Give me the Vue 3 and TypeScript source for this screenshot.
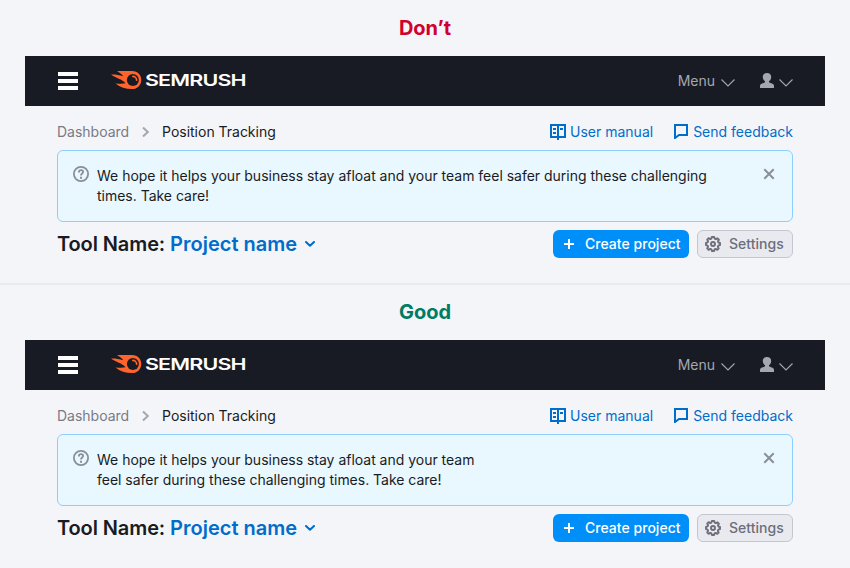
<script setup lang="ts">
interface Example {
  id: string
  title: string
  narrow: boolean
}

const examples: Example[] = [
  { id: 'dont', title: 'Don’t', narrow: false },
  { id: 'good', title: 'Good', narrow: true },
]

const message =
  'We hope it helps your business stay afloat and your team feel safer during these challenging times. Take care!'
</script>

<template>
  <main class="page">
    <section v-for="example in examples" :key="example.id" class="example">
      <h2 class="verdict" :class="example.id">{{ example.title }}</h2>

      <header class="topbar">
        <svg class="burger" width="20" height="18" viewBox="0 0 20 18">
          <path d="M0 0h20v4H0zM0 7h20v4H0zM0 14h20v4H0z" fill="#fff" />
        </svg>
        <svg class="logo" width="138" height="20" viewBox="0 0 138 20">
          <path
            d="M0 4.600C3.500 4.400 8 5 12.300 6.200C11 4.200 8.500 2.600 6 1C11 .8 17 .9 21 .9C26.800 .9 30.300 5 30.300 10C30.300 15 26.400 19.100 21 19.100C14.500 19.100 9 17 4.500 13.400C8.500 13.800 12 13.900 14.500 13.300C11.500 9.300 4.500 8 0 4.600Z"
            fill="#ff642d"
          />
          <circle cx="21.900" cy="10" r="6" fill="#181b23" />
          <path d="M21.900 6.400a3.700 3.700 0 0 1 3.700 3.700" fill="none" stroke="#ff642d" stroke-width="1.700" stroke-linecap="round" />
          <text class="wordmark" transform="translate(34 15.900) scale(1.340 1)" textLength="75.800" lengthAdjust="spacing">SEMRUSH</text>
        </svg>
        <div class="menu">
          <span>Menu</span>
          <svg width="14" height="8" viewBox="0 0 14 8">
            <path d="M.5 .5L7 7L13.500 .5" fill="none" stroke="#a4a7b0" stroke-width="1.100" />
          </svg>
        </div>
        <div class="user">
          <svg width="14" height="15" viewBox="0 0 14 15">
            <path
              d="M7 0C9.500 0 11.200 1.500 11.200 4.100C11.200 6 10.300 7.500 9 8.300V9.300C10 10.200 14 10.500 14 12.800V15H0V12.800C0 10.500 4 10.200 5 9.300V8.300C3.700 7.500 2.800 6 2.800 4.100C2.800 1.500 4.500 0 7 0Z"
              fill="#a4a7b0"
            />
          </svg>
          <svg class="user-arrow" width="14" height="8" viewBox="0 0 14 8">
            <path d="M.5 .5L7 7L13.500 .5" fill="none" stroke="#a4a7b0" stroke-width="1.100" />
          </svg>
        </div>
      </header>

      <div class="content">
        <div class="crumbs">
          <span class="parent">Dashboard</span>
          <svg class="separator" width="8" height="12" viewBox="0 0 8 12">
            <path d="M1 1.500L5.800 6L1 10.500" fill="none" stroke="#a4a7b0" stroke-width="2" />
          </svg>
          <span class="current">Position Tracking</span>
          <a class="link manual">
            <svg width="16" height="16" viewBox="0 0 16 16" fill="none" stroke="#006dca" stroke-width="2">
              <path d="M1 1H15V13H1ZM8 1V16" />
              <path d="M3 5H6M3 9H6M10 5H13" stroke-width="2" />
            </svg>
            <span>User manual</span>
          </a>
          <a class="link feedback">
            <svg width="14" height="15" viewBox="0 0 14 15" fill="none" stroke="#006dca" stroke-width="2">
              <path d="M1 1H13V11H5L1 14Z" />
            </svg>
            <span>Send feedback</span>
          </a>
        </div>

        <div class="notice">
          <svg class="help" width="16" height="16" viewBox="0 0 16 16" fill="none" stroke="#8a8e9b">
            <circle cx="8" cy="8" r="7.100" stroke-width="1.800" />
            <path d="M5.900 6.500C5.900 5 6.700 4.200 8 4.200C9.300 4.200 10.100 4.900 10.100 6C10.100 7.500 8 7.600 8 9.400" stroke-width="1.800" />
            <path d="M7 10.700h2v2h-2z" fill="#8a8e9b" stroke="none" />
          </svg>
          <p class="message" :class="{ narrow: example.narrow }">{{ message }}</p>
          <svg class="close" width="12" height="12" viewBox="0 0 12 12">
            <path d="M1.300 1.300L10.700 10.700M10.700 1.300L1.300 10.700" stroke="#8a8e9b" stroke-width="2" />
          </svg>
        </div>

        <div class="tool">
          <h1 class="name">Tool Name: <span class="project">Project name</span></h1>
          <svg class="project-arrow" width="10" height="6" viewBox="0 0 10 6">
            <path d="M1 1L5 4.800L9 1" fill="none" stroke="#006dca" stroke-width="2" stroke-linecap="round" stroke-linejoin="round" />
          </svg>
          <button class="button create" type="button">
            <svg width="10" height="10" viewBox="0 0 10 10">
              <path d="M5 0V10M0 5H10" stroke="#fff" stroke-width="2" />
            </svg>
            <span>Create project</span>
          </button>
          <button class="button settings" type="button">
            <svg width="16" height="16" viewBox="0 0 16 16" fill="none" stroke="#6c6e79">
              <path
                d="M6.800 1H9.200L9.700 2.700L10.900 3.200L12.500 2.300L13.900 3.700L13 5.300L13.400 6.500L15 7V9.200L13.300 9.700L12.800 10.900L13.700 12.500L12.300 13.800L10.700 12.900L9.600 13.400L9.100 15H6.900L6.400 13.400L5.200 12.900L3.600 13.800L2.200 12.400L3.100 10.800L2.600 9.600L1 9.100V6.900L2.600 6.400L3.100 5.200L2.200 3.600L3.600 2.200L5.200 3.100L6.300 2.600Z"
                stroke-width="1.900"
                stroke-linejoin="round"
              />
              <circle cx="8" cy="8" r="2" stroke-width="1.900" />
            </svg>
            <span>Settings</span>
          </button>
        </div>
      </div>
    </section>
  </main>
</template>

<style>
body {
  background: #f4f5f9;
}
</style>

<style scoped>
.page {
  width: 850px;
  height: 568px;
  overflow: hidden;
  background: #f4f5f9;
  color: #191b23;
  font-family: Inter, "Liberation Sans", sans-serif;
  font-size: 14px;
  line-height: 20px;
  letter-spacing: -0.015px;
}
.page svg {
  display: block;
  flex: none;
}
.example {
  box-sizing: border-box;
  height: 284px;
}
.example:first-child {
  box-shadow: 0 1px 0 #e9eaef, inset 0 -1px 0 #e9eaef;
}
.verdict {
  margin: 0;
  height: 56px;
  font-size: 20px;
  font-weight: 700;
  line-height: 56px;
  text-align: center;
}
.dont {
  color: #d1002f;
}
.good {
  color: #007c65;
}
.topbar {
  display: flex;
  align-items: center;
  box-sizing: border-box;
  width: 800px;
  height: 50px;
  margin: 0 auto;
  padding: 0 32px 0 33px;
  background: #181b23;
  color: #a4a7b0;
}
.logo {
  margin: -2px 0 0 33px;
}
.wordmark {
  fill: #fff;
  font-size: 16px;
  font-weight: 600;
}
.menu {
  display: flex;
  align-items: center;
  gap: 6px;
  margin-left: auto;
}
.menu svg {
  margin-top: 3px;
}
.user {
  display: flex;
  align-items: center;
  gap: 5px;
  margin-left: 25px;
}
.user svg:first-child {
  margin-top: -1px;
}
.user-arrow {
  margin-top: 3px;
}
.content {
  padding: 0 57px;
}
.crumbs {
  display: flex;
  align-items: flex-start;
  box-sizing: border-box;
  height: 44px;
  padding-top: 16px;
}
.parent {
  color: #787b86;
}
.separator {
  margin: 4px 12px 0 13px;
}
.link {
  display: flex;
  color: #006dca;
  letter-spacing: 0;
}
.link svg {
  margin-top: 2px;
}
.manual {
  gap: 4px;
  margin-left: auto;
}
.feedback {
  gap: 5px;
  margin-left: 21px;
}
.notice {
  display: flex;
  align-items: flex-start;
  box-sizing: border-box;
  height: 72px;
  padding: 15px 17px 0 15px;
  border: 1px solid #8ecdff;
  border-radius: 6px;
  background: #e9f7ff;
}
.message {
  width: 620px;
  margin: 0 auto 0 8px;
}
.message.narrow {
  width: 390px;
}
.close {
  margin-top: 2px;
}
.tool {
  display: flex;
  align-items: center;
  height: 28px;
  margin-top: 8px;
}
.name {
  margin: 0;
  font-size: 20px;
  font-weight: 600;
  line-height: 28px;
  letter-spacing: -0.1px;
}
.project {
  color: #006dca;
  letter-spacing: 0;
}
.project-arrow {
  margin-left: 8px;
}
.button {
  display: flex;
  align-items: center;
  box-sizing: border-box;
  height: 28px;
  border: 0;
  border-radius: 6px;
  font: 500 14px/20px Inter, "Liberation Sans", sans-serif;
  letter-spacing: 0.03px;
}
.create {
  gap: 11px;
  width: 136px;
  margin-left: auto;
  padding: 0 0 0 11px;
  background: #008ff8;
  color: #fff;
}
.settings {
  gap: 8px;
  width: 96px;
  margin-left: 8px;
  padding: 0 0 0 7px;
  border: 1px solid #c4c7cf;
  background: #e9eaf0;
  color: #6c6e79;
}
</style>
